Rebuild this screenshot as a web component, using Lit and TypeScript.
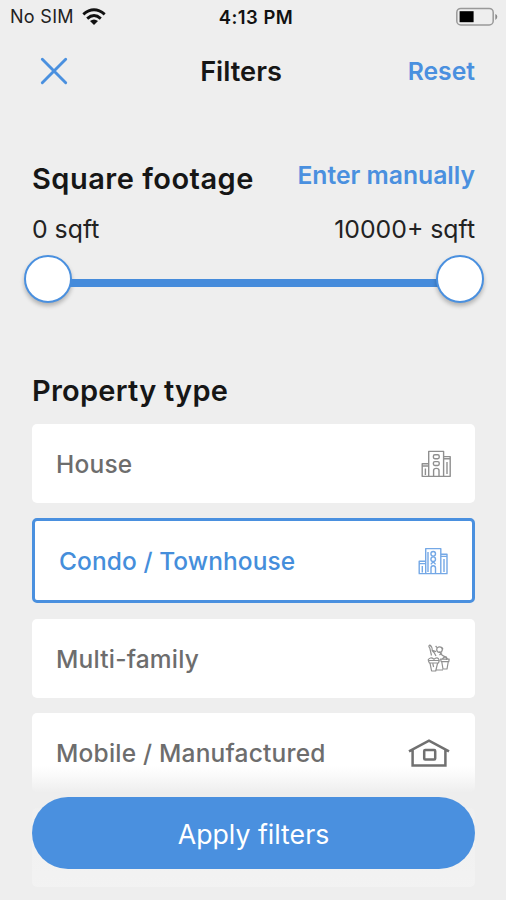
import { LitElement, html, svg, css } from "lit";
import { customElement, property } from "lit/decorators.js";

const building = svg`
  <path d="M9.7 28V3.4H24.6V28M3.2 28V15.8H9.7M24.6 8.6H31.2V28M2.6 28.4H31.8M3.8 18H9M25.2 10.8H30.6M14.6 28V22.4Q14.6 20.4 17.3 20.4T20 22.4V28M6.4 20.5V27M28 14V26"/>
  <rect x="14.4" y="6.8" width="5.8" height="3.9" rx="1.4"/>
  <rect x="14.4" y="13.6" width="5.8" height="3.9" rx="1.4"/>`;

const condo = svg`
  <path d="M9.7 28.5V3.6H24.8V28.5M3.2 28.5V16.2H9.7M24.8 9.2H31V28.5M2.6 28.6H31.6M3.8 18.6H9M25.5 11.4H30.5M15 28V23Q15 20.8 17.2 20.8T19.5 23V28M6.3 21V27.5M28 14V27M12 7V27"/>
  <circle cx="17.2" cy="8.8" r="2.3"/><circle cx="17.2" cy="14.2" r="2.3"/><path d="M14.8 19.4L17.2 16.8L19.6 19.4"/>`;

const plants = svg`
  <path d="M4.5 12.5L2.8 5.2Q1 2.8 2.8 2Q5.4 3.8 5.2 7.5L7.5 10.2L9 13M5.4 7.4L9 8.6M15 9.6L12.5 12M12.5 8.6Q14.5 13.2 19.5 14.2V17M1 17Q3.2 13.4 7 16.2Q10.5 13 12.2 17M1.3 17.5H12.3L11.5 20H2.4ZM3 20.2L4.6 28H8.7L10.6 20.2M13.6 16.2H22.2L21.8 18.6H14.2ZM14.8 19L16 26H20L21.2 19M9.3 27H16M15.5 15.6Q18 12.8 20.5 15.6M5.8 20.5L6.6 24"/>
  <circle cx="12.5" cy="6.6" r="2.8"/><path d="M10 4.6L8.6 3M15 4.6L16 6.4"/>`;

const cabin = svg`
  <path d="M2 13.4L22 2.6L42 13.4M5.6 12V27.4H38.4V12" />
  <rect x="17.2" y="12" width="11" height="9.6" rx="1"/>`;

@customElement("type-option")
class TypeOption extends LitElement {
  @property() label = "";
  @property() kind = "";
  @property({ type: Boolean, reflect: true }) selected = false;

  static styles = css`
    :host { display: block; flex: none; }
    .card {
      box-sizing: border-box; height: 78.8px; padding: 0 24px; border-radius: 5px;
      display: flex; align-items: center; justify-content: space-between;
      background: #fff; color: #6d6d6d; font-size: 24.5px; font-weight: 500; letter-spacing: 0.2px;
    }
    :host([selected]) .card { height: 84.8px; border: 3px solid #4a90df; color: #458edb; letter-spacing: 0.08px; }
    span { padding-top: 2px; }
    svg { display: block; fill: none; stroke: currentColor; stroke-linejoin: round; }
    .building { stroke: #8f8f8f; stroke-width: 1.4; margin: 1px -2px 0 0; }
    .condo { stroke: #74a8e6; stroke-width: 1.4; margin: 1px -2px 0 0; }
    .plants { stroke: #909090; stroke-width: 1.2; }
    .cabin { stroke: #707070; stroke-width: 2.5; stroke-linejoin: miter; margin-top: 1px; }
  `;

  icon() {
    switch (this.kind) {
      case "building":
        return html`<svg class="building" width="34" height="32" viewBox="0 0 34 32">${building}</svg>`;
      case "condo":
        return html`<svg class="condo" width="34" height="32" viewBox="0 0 34 32">${condo}</svg>`;
      case "plants":
        return html`<svg class="plants" width="24" height="30" viewBox="0 0 24 30">${plants}</svg>`;
      case "cabin":
        return html`<svg class="cabin" width="44" height="30" viewBox="0 0 44 30">${cabin}</svg>`;
      default:
        return "";
    }
  }

  render() {
    return html`<div class="card"><span>${this.label}</span>${this.icon()}</div>`;
  }
}

@customElement("app-root")
class AppRoot extends LitElement {
  static styles = css`
    :host {
      display: block; position: relative; height: 900px; overflow: hidden;
      background: #eee; color: #161616;
      font-family: Inter, "Liberation Sans", sans-serif; line-height: 1.2;
    }
    .status {
      height: 34px; padding: 0 8px 0 10px; box-sizing: border-box;
      display: grid; grid-template-columns: 1fr auto 1fr; align-items: center;
      font-size: 18px; color: #222;
    }
    .carrier { display: flex; align-items: center; gap: 8px; letter-spacing: 0.3px; }
    .time { font-weight: 600; font-size: 18.4px; letter-spacing: 0.5px; color: #111; margin-left: 4px; padding-top: 1px; }
    .battery { justify-self: end; }
    .nav {
      height: 75px; padding: 0 31px 0 39px;
      display: grid; grid-template-columns: 1fr auto 1fr; align-items: center;
    }
    .nav svg { margin-top: -2px; }
    .title { font-size: 27.2px; font-weight: 600; margin-right: 32px; padding-top: 1px; }
    .link { color: #4a90df; font-weight: 600; font-size: 24.7px; justify-self: end; }
    .footage { padding: 51px 31px 0 32px; }
    .heading { display: flex; justify-content: space-between; align-items: flex-start; }
    h2 { margin: 0; font-size: 29px; font-weight: 600; line-height: 36px; letter-spacing: 0.25px; }
    .heading .link { line-height: 30px; }
    .heading h2 { padding-top: 1px; letter-spacing: 0.5px; }
    .range { display: flex; justify-content: space-between; margin-top: 17px; font-size: 24.8px; line-height: 30px; color: #222; }
    .slider { display: flex; align-items: center; margin: 11px -9px 0 -8px; height: 48px; }
    .knob {
      box-sizing: border-box; width: 48px; height: 48px; border-radius: 50%; flex: none;
      border: 2px solid #4a90df; background: #fff; box-shadow: 0 3px 4px rgba(0,0,0,.25);
    }
    .track { flex: 1; height: 8px; margin: 8px -2px 0; background: #458bdb; }
    .types { padding: 70px 31px 0 32px; }
    .list { display: flex; flex-direction: column; gap: 15.7px; margin-top: 15px; }
    .footer {
      position: absolute; left: 0; right: 0; bottom: 0; height: 140px; padding: 37px 31px 0 32px;
      box-sizing: border-box;
      background: linear-gradient(rgba(238,238,238,0) 6px, rgba(238,238,238,.2) 13px, rgba(238,238,238,.93) 31px, rgba(238,238,238,.8) 100px, rgba(238,238,238,.7));
    }
    .apply {
      width: 100%; height: 72px; border: 0; border-radius: 36px; padding: 1px 0 0; box-sizing: border-box;
      background: #4a90df; color: #fff; font: 400 26.7px/70px Inter, "Liberation Sans", sans-serif;
    }
  `;

  render() {
    return html`
      <div class="status">
        <div class="carrier">
          <span>No SIM</span>
          <svg width="24" height="18" viewBox="0 0 24 18" fill="none" stroke="#111" stroke-width="2.9">
            <path d="M1.3 6.4Q12 -2.8 22.7 6.4M5.2 10.6Q12 4.6 18.8 10.6" />
            <path d="M8 13Q12 9.8 16 13L12 17Z" fill="#111" stroke="none" />
          </svg>
        </div>
        <span class="time">4:13 PM</span>
        <svg class="battery" width="43" height="20" viewBox="0 0 43 20">
          <rect x="1.8" y="1.4" width="36.4" height="16.6" rx="4" fill="none" stroke="#999" stroke-width="1.5" />
          <rect x="4.6" y="4.2" width="14" height="11" fill="#000" />
          <path d="M40.3 7Q42.3 7.8 42.3 9.8T40.3 13Z" fill="#888" />
        </svg>
      </div>
      <div class="nav">
        <svg width="30" height="30" viewBox="0 0 30 30" stroke="#4a90df" stroke-width="2.9" stroke-linecap="round">
          <path d="M3.3 3.3L26.7 26.7M26.7 3.3L3.3 26.7" />
        </svg>
        <span class="title">Filters</span>
        <span class="link">Reset</span>
      </div>
      <section class="footage">
        <div class="heading"><h2>Square footage</h2><span class="link">Enter manually</span></div>
        <div class="range"><span>0 sqft</span><span>10000+ sqft</span></div>
        <div class="slider"><div class="knob"></div><div class="track"></div><div class="knob"></div></div>
      </section>
      <section class="types">
        <h2>Property type</h2>
        <div class="list">
          <type-option label="House" kind="building"></type-option>
          <type-option label="Condo / Townhouse" kind="condo" selected></type-option>
          <type-option label="Multi-family" kind="plants"></type-option>
          <type-option label="Mobile / Manufactured" kind="cabin"></type-option>
          <type-option></type-option>
        </div>
      </section>
      <div class="footer"><button class="apply">Apply filters</button></div>
    `;
  }
}
